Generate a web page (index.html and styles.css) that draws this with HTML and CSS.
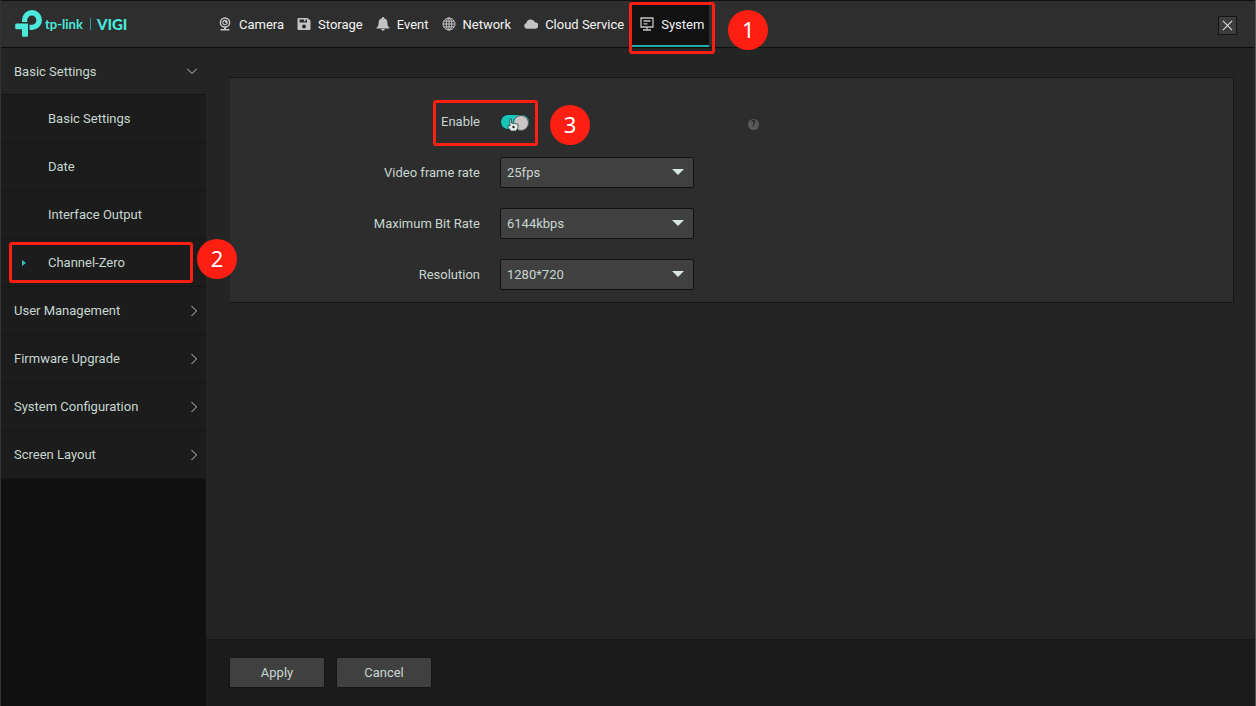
FILE: index.html
```html
<!DOCTYPE html>
<html lang="en">
<head>
    <meta charset="UTF-8">
    <meta name="viewport" content="width=device-width, initial-scale=1.0">
    <title>VIGI - Channel-Zero</title>
    <link rel="stylesheet" href="styles.css">
</head>
<body>
    <header class="header">
        <div class="logo">
            <svg class="logo-mark" viewBox="0 0 28 28" aria-hidden="true">
                <path d="M7 12V10a10 10 0 1 1 10 10h-2.500V14.800h2.300a4.600 4.600 0 1 0-4.600-4.600v1.800z"/>
                <path d="M1.500 13.500h11.500V25.500a1.300 1.300 0 0 1-1.300 1.300h-3.400A1.300 1.300 0 0 1 7 25.500V19.300H1.500A1.300 1.300 0 0 1 .2 18v-3.200a1.300 1.300 0 0 1 1.300-1.300z"/>
            </svg>
            <span class="logo-name">tp-link</span>
            <span class="logo-sub">VIGI</span>
        </div>

        <nav class="nav">
            <a href="#camera">
                <svg viewBox="0 0 14 14"><circle cx="7" cy="5.500" r="4.600" fill="none" stroke="currentColor" stroke-width="1.500"/><path fill-rule="evenodd" d="M7 2.800a2.700 2.700 0 1 0 0 5.400 2.700 2.700 0 0 0 0-5.400zM7 4v1.800h1.600A1.600 1.600 0 1 1 7 4z"/><path d="M6 10h2v2h3.500v1.500h-9V12H6z"/></svg>
                Camera
            </a>
            <a href="#storage">
                <svg viewBox="0 0 14 14"><path fill-rule="evenodd" d="M1.500 1h9L13.500 3.500V12a1 1 0 0 1-1 1h-11a1 1 0 0 1-1-1V2a1 1 0 0 1 1-1zm1 1.500v3h7.500v-3H8.500v1.700H7V2.500zM7 7.500a2 2 0 1 0 0 4 2 2 0 0 0 0-4z"/></svg>
                Storage
            </a>
            <a href="#event">
                <svg viewBox="0 0 14 14"><path d="M7 0a1 1 0 0 1 1 1.200c2.200.5 3.400 2 3.400 4.300 0 3 .6 4 2 5v1H.6v-1c1.400-1 2-2 2-5C2.600 3.200 3.800 1.700 6 1.200A1 1 0 0 1 7 0zM5.200 12h3.600a1.800 1.800 0 0 1-3.600 0z"/></svg>
                Event
            </a>
            <a href="#network">
                <svg viewBox="0 0 14 14" fill="none" stroke="currentColor" stroke-width="1"><circle cx="7" cy="7" r="6"/><ellipse cx="7" cy="7" rx="2.800" ry="6"/><path d="M7 1v12M1 7h12M1.800 4.200h10.400M1.800 9.800h10.400"/></svg>
                Network
            </a>
            <a href="#cloud">
                <svg viewBox="0 0 14 14"><path d="M2.800 11.800a2.900 2.900 0 0 1-.4-5.700A4.500 4.500 0 0 1 10.900 5.200a3.300 3.300 0 0 1 .3 6.600z"/></svg>
                Cloud Service
            </a>
            <a href="#system" class="active">
                <svg viewBox="0 0 14 14"><path fill="none" stroke="currentColor" stroke-width="1.300" d="M1 1h12v9H1zM7 10v2.500M3 13h8M3.500 4h7M3.500 6.800h4"/></svg>
                System
                <span class="mark mark-tab"></span>
                <span class="step step-tab">1</span>
            </a>
        </nav>

        <button class="close" aria-label="Close">
            <svg viewBox="0 0 12 12"><path d="M1 1l10 10M11 1L1 11"/></svg>
        </button>
    </header>

    <div class="layout">
        <aside class="sidebar">
            <a href="#basic" class="group open">Basic Settings
                <svg viewBox="0 0 10 10"><path d="M0 2.500l5 5 5-5"/></svg>
            </a>
            <a href="#basic-settings" class="sub">Basic Settings</a>
            <a href="#date" class="sub">Date</a>
            <a href="#interface-output" class="sub">Interface Output</a>
            <a href="#channel-zero" class="sub current">Channel-Zero
                <span class="mark mark-menu"></span>
                <span class="step step-menu">2</span>
            </a>
            <a href="#users" class="group">User Management
                <svg viewBox="0 0 10 10"><path d="M2.500 0l5 5-5 5"/></svg>
            </a>
            <a href="#firmware" class="group">Firmware Upgrade
                <svg viewBox="0 0 10 10"><path d="M2.500 0l5 5-5 5"/></svg>
            </a>
            <a href="#configuration" class="group">System Configuration
                <svg viewBox="0 0 10 10"><path d="M2.500 0l5 5-5 5"/></svg>
            </a>
            <a href="#screen" class="group">Screen Layout
                <svg viewBox="0 0 10 10"><path d="M2.500 0l5 5-5 5"/></svg>
            </a>
        </aside>

        <main class="main">
            <form class="panel" id="channelZero">
                <div class="row">
                    <label for="enable">Enable</label>
                    <div class="field toggle-field">
                        <input type="checkbox" class="toggle" id="enable" checked>
                        <svg class="pointer" viewBox="0 0 12 14" aria-hidden="true"><path d="M3 1v7L1 7.500 0.800 9 4 13h5l2-3.500V6L7 5.500 4.500 5V1z" fill="#e8e8e8" stroke="#1d4f4d" stroke-width=".8"/><circle cx="6.500" cy="9" r="1.200" fill="#222"/></svg>
                    </div>
                    <button type="button" class="help" aria-label="Help">?</button>
                    <span class="mark mark-enable"></span>
                    <span class="step step-enable">3</span>
                </div>
                <div class="row">
                    <label for="frameRate">Video frame rate</label>
                    <div class="field select">
                        <select id="frameRate"><option>25fps</option></select>
                    </div>
                </div>
                <div class="row">
                    <label for="bitRate">Maximum Bit Rate</label>
                    <div class="field select">
                        <select id="bitRate"><option>6144kbps</option></select>
                    </div>
                </div>
                <div class="row">
                    <label for="resolution">Resolution</label>
                    <div class="field select">
                        <select id="resolution"><option>1280*720</option></select>
                    </div>
                </div>
            </form>

            <footer class="actions">
                <button type="submit" form="channelZero">Apply</button>
                <button type="button">Cancel</button>
            </footer>
        </main>
    </div>
</body>
</html>
```

FILE: styles.css
```css
* {
    margin: 0;
    padding: 0;
    box-sizing: border-box;
}

body {
    display: flex;
    flex-direction: column;
    min-height: 100vh;
    background: #242424;
    border-left: 1px solid #333;
    border-right: 1px solid #555;
    color: #c8d6d0;
    font-family: Roboto, "Open Sans", sans-serif;
    font-size: 13px;
}

a {
    color: inherit;
    text-decoration: none;
}

button,
select {
    color: inherit;
    font: inherit;
}

/* Header */
.header {
    display: flex;
    height: 48px;
    background: #2e2e2e;
    border-top: 1px solid #111;
    border-bottom: 1px solid #0c0c0c;
}

.logo {
    display: flex;
    align-items: center;
    width: 211px;
    padding-left: 14px;
    color: #4be8dc;
}

.logo-mark {
    width: 28px;
    height: 28px;
    fill: currentColor;
}

.logo-name {
    margin-left: 2px;
    padding-right: 7px;
    font-family: Lato, sans-serif;
    font-size: 13px;
    font-weight: 700;
}

.logo-sub {
    padding-left: 6px;
    border-left: 1px solid #2f9a94;
    font-family: Lato, sans-serif;
    font-size: 15px;
    line-height: 12px;
    font-weight: 900;
}

.nav {
    display: flex;
    color: #f4f4f4;
}

.nav a {
    position: relative;
    display: flex;
    align-items: center;
    gap: 7px;
    padding: 0 7px 0 6px;
    white-space: nowrap;
}

.nav svg {
    width: 14px;
    height: 14px;
    color: #c4c4c4;
    fill: currentColor;
}

.nav svg[fill="none"] {
    fill: none;
}

.nav .active {
    padding: 2px 5px 0 9px;
    background: #111;
    border-bottom: 2px solid #25aaa8;
}

.close {
    display: flex;
    align-items: center;
    justify-content: center;
    align-self: center;
    width: 19px;
    height: 19px;
    margin: 2px 18px 0 auto;
    background: #3d3d3d;
    border: 1px solid #151515;
}

.close svg {
    width: 11px;
    height: 11px;
    stroke: #d8d8d8;
    stroke-width: 1.3;
}

/* Sidebar */
.layout {
    display: flex;
    flex: 1;
}

.sidebar {
    flex: none;
    width: 205px;
    background: #101010;
}

.sidebar a {
    position: relative;
    display: flex;
    align-items: center;
    height: 48px;
    background: #1c1c1c;
    border-bottom: 1px solid #151515;
}

.sidebar .group {
    justify-content: space-between;
    padding: 0 7px 0 13px;
}

.sidebar .open {
    height: 47px;
    padding-right: 9px;
    background: #242424;
}

.sidebar .sub {
    padding-left: 47px;
}

.sidebar svg {
    width: 10px;
    height: 10px;
    fill: none;
    stroke: #c0c8c4;
    stroke-width: 1;
}

.current::before {
    content: "";
    position: absolute;
    left: 21px;
    border: 3px solid transparent;
    border-left: 4px solid #2cc4c0;
    border-right: 0;
}

/* Settings */
.main {
    display: flex;
    flex: 1;
    flex-direction: column;
    justify-content: space-between;
    min-width: 0;
}

.panel {
    display: flex;
    flex-direction: column;
    gap: 20px;
    margin: 29px 21px 24px 23px;
    padding: 28px 0 12px;
    background: #2d2d2d;
    border: 1px solid #161616;
    border-left-color: #242424;
}

.row {
    position: relative;
    display: flex;
    align-items: center;
    height: 31px;
}

.row label {
    width: 250px;
    margin-right: 20px;
    text-align: right;
}

.field {
    position: relative;
    width: 194px;
}

.toggle-field {
    display: flex;
}

.toggle {
    appearance: none;
    display: flex;
    justify-content: flex-end;
    width: 30px;
    height: 16px;
    background: #3a3a3a;
    border: 1px solid #1c2a2a;
    border-radius: 8px;
}

.toggle:checked {
    background: #15c5ba;
}

.toggle::before {
    content: "";
    width: 14px;
    height: 14px;
    background: #c9c5c6;
    border: 1px solid #555;
    border-radius: 50%;
}

.toggle:not(:checked) {
    justify-content: flex-start;
}

.pointer {
    position: absolute;
    top: 4px;
    left: 7px;
    width: 12px;
    height: 14px;
}

.select select {
    appearance: none;
    display: block;
    width: 100%;
    height: 31px;
    padding: 0 30px 0 6px;
    background: #404040;
    border: 1px solid #121212;
    border-radius: 2px;
}

.select::after {
    content: "";
    position: absolute;
    top: 12px;
    right: 10px;
    border: 6px solid transparent;
    border-top-color: #d6e6de;
    border-bottom: 0;
    pointer-events: none;
}

.help {
    width: 11px;
    height: 11px;
    margin: 6px 0 0 54px;
    background: #5a5a5a;
    border: 0;
    border-radius: 50%;
    color: #242424;
    font-size: 9px;
    font-weight: 700;
    line-height: 11px;
}

.actions {
    display: flex;
    gap: 11px;
    padding: 17px 23px 18px;
    background: #1b1b1b;
    border-top: 1px solid #171717;
}

.actions button {
    width: 96px;
    height: 31px;
    background: #404040;
    border: 1px solid #161616;
    border-radius: 2px;
}

/* Numbered step callouts */
.mark {
    position: absolute;
    z-index: 1;
    border: 3px solid #ff1e12;
    border-radius: 3px;
    pointer-events: none;
}

.step {
    position: absolute;
    z-index: 1;
    width: 40px;
    height: 40px;
    background: #ff1e12;
    border-radius: 50%;
    color: #fff;
    font-family: "Noto Sans", sans-serif;
    font-size: 22px;
    font-weight: 400;
    line-height: 38px;
    text-align: center;
}

.mark-tab {
    inset: 1px -6px -9px -2px;
}

.step-tab {
    top: 9px;
    left: 97px;
}

.mark-menu {
    inset: 3px 13px 3px 8px;
}

.step-menu {
    top: 0;
    left: 196px;
}

.mark-enable {
    top: -6px;
    left: 203px;
    width: 105px;
    height: 46px;
}

.step-enable {
    top: -1px;
    left: 320px;
}
```
